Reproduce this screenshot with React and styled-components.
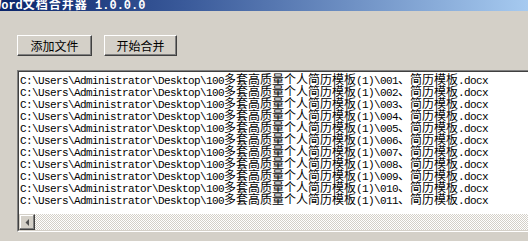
import React from "react";
import styled, { createGlobalStyle } from "styled-components";

const Global = createGlobalStyle`
  html, body { margin: 0; padding: 0; background: #d4d0c8; }
  #root { width: 528px; height: 241px; }
`;

const Window = styled.div`
  width: 528px;
  height: 241px;
  background: #d4d0c8;
  overflow: hidden;
  display: flex;
  flex-direction: column;
`;

const TitleBar = styled.div`
  height: 11px;
  flex: none;
  background: linear-gradient(to right, #0a246a 0%, #3a5a9a 35%, #a6caf0 100%);
  overflow: hidden;
  display: flex;
  align-items: flex-end;
`;

const TitleText = styled.div`
  margin-left: -6px;
  color: #fff;
  font-weight: bold;
  font-size: 12px;
  line-height: 12px;
  white-space: pre;
  transform: translateY(1px);
`;

const TitleAscii = styled.span`
  font-family: "Liberation Mono", monospace;
  font-size: 12px;
  letter-spacing: 0px;
`;

const TitleCjk = styled.span`
  font-family: "Noto Sans CJK SC", sans-serif;
  font-size: 12px;
  letter-spacing: 1px;
`;

const Body = styled.div`
  flex: 1;
  display: flex;
  flex-direction: column;
  padding: 24px 0 0 17px;
`;

const Toolbar = styled.div`
  display: flex;
  gap: 12px;
`;

const Button = styled.button`
  width: ${(p) => p.$w}px;
  height: 21px;
  padding: 0;
  margin: 0;
  background: #d4d0c8;
  border: 1px solid;
  border-color: #fff #404040 #404040 #fff;
  box-shadow: inset -1px -1px #808080, inset 1px 1px #d4d0c8;
  font-family: "Noto Sans CJK SC", sans-serif;
  font-size: 12px;
  line-height: 12px;
  color: #000;
`;

const ListBox = styled.div`
  margin-top: 14px;
  width: 540px;
  height: 162px;
  box-sizing: border-box;
  border: 1px solid;
  border-color: #808080 #fff #fff #808080;
  display: flex;
  flex-direction: column;
`;

const ListInner = styled.div`
  flex: 1;
  display: flex;
  flex-direction: column;
  border: 1px solid;
  border-color: #404040 #d4d0c8 #d4d0c8 #404040;
  background: #fff;
  min-height: 0;
`;

const Lines = styled.div`
  flex: 1;
  padding: 1px 0 0 1px;
  overflow: hidden;
`;

const Line = styled.div`
  height: 12px;
  line-height: 12px;
  white-space: pre;
  color: #000;
`;

const Ascii = styled.span`
  font-family: "Liberation Mono", monospace;
  font-size: 11px;
  letter-spacing: -0.6px;
`;

const Cjk = styled.span`
  font-family: "Noto Sans CJK SC", sans-serif;
  font-size: 12px;
`;

const HScroll = styled.div`
  height: 16px;
  flex: none;
  display: flex;
  background: repeating-conic-gradient(#d4d0c8 0 25%, #ffffff 0 50%) 0 0 / 2px 2px;
`;

const ArrowButton = styled.div`
  width: 16px;
  height: 16px;
  box-sizing: border-box;
  background: #d4d0c8;
  border: 1px solid;
  border-color: #d4d0c8 #404040 #404040 #d4d0c8;
  box-shadow: inset -1px -1px #808080, inset 1px 1px #fff;
  display: flex;
  align-items: center;
  justify-content: center;
`;

const CJK_RE = /([\u3000-\u9fff\uff00-\uffef]+)/;

const MixedText = ({ text, A = Ascii, C = Cjk }) => {
  const parts = text.split(CJK_RE).filter(Boolean);
  return parts.map((p, i) =>
    /[\u3000-\u9fff\uff00-\uffef]/.test(p) ? <C key={i}>{p}</C> : <A key={i}>{p}</A>
  );
};

const files = Array.from({ length: 11 }, (_, i) => {
  const n = String(i + 1).padStart(3, "0");
  return `C:\\Users\\Administrator\\Desktop\\100多套高质量个人简历模板(1)\\${n}、简历模板.docx`;
});

export default function App() {
  return (
    <>
      <Global />
      <Window>
        <TitleBar>
          <TitleText>
            <MixedText text="Word文档合并器 1.0.0.0" A={TitleAscii} C={TitleCjk} />
          </TitleText>
        </TitleBar>
        <Body>
          <Toolbar>
            <Button $w={75}>添加文件</Button>
            <Button $w={73}>开始合并</Button>
          </Toolbar>
          <ListBox>
            <ListInner>
              <Lines>
                {files.map((f) => (
                  <Line key={f}>
                    <MixedText text={f} />
                  </Line>
                ))}
              </Lines>
              <HScroll>
                <ArrowButton>
                  <svg width="4" height="7" viewBox="0 0 4 7">
                    <path d="M4 0 L4 7 L0.5 3.5 Z" fill="#505050" />
                  </svg>
                </ArrowButton>
              </HScroll>
            </ListInner>
          </ListBox>
        </Body>
      </Window>
    </>
  );
}
